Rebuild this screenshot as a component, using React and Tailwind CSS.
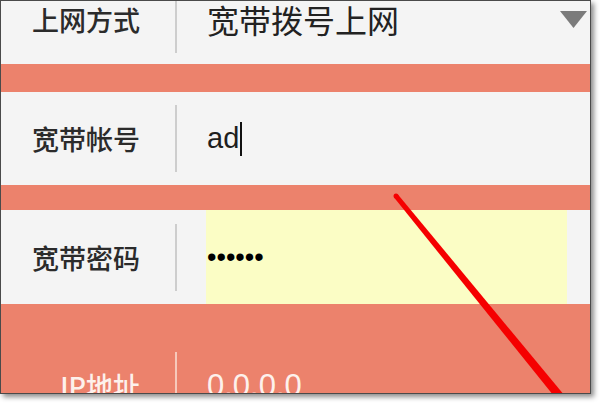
import React from "react";

const CJK = { fontFamily: '"Noto Sans CJK SC", "Noto Sans", sans-serif' };
const LAT = { fontFamily: '"Liberation Sans", Arial, sans-serif' };

function Label({ children, light }) {
  return (
    <div
      className={`w-[139px] shrink-0 text-right text-[27px] font-medium leading-none ${light ? "text-[#fdf1ec]" : "text-[#2b2b2b]"}`}
      style={CJK}
    >
      {children}
    </div>
  );
}

function Divider({ light }) {
  return (
    <div
      className={`ml-[35px] h-[67px] w-[2px] shrink-0 ${light ? "bg-[#f7c9bb]" : "bg-[#cdcdcd]"}`}
    />
  );
}

export default function App() {
  return (
    <div className="w-[600px] h-[404px] bg-white">
      <div className="relative w-[591px] h-[394px] overflow-hidden border border-[#4a4a4a] bg-[#f4f4f4] shadow-[3px_3px_5px_rgba(0,0,0,0.45)]">
        {/* Row 1: 上网方式 (clipped at top) */}
        <div className="flex h-[63px] items-end overflow-hidden bg-[#f4f4f4]">
          <div className="flex h-[90px] w-full shrink-0 items-center">
            <Label>上网方式</Label>
            <Divider />
            <div
              className="ml-[30px] flex-1 text-[32px] leading-none text-[#222]"
              style={CJK}
            >
              宽带拨号上网
            </div>
            <svg
              className="mr-[3px] shrink-0"
              width="27"
              height="17"
              viewBox="0 0 27 17"
            >
              <polygon points="0,0 27,0 13.5,17" fill="#7b7b7b" />
            </svg>
          </div>
        </div>

        <div className="h-[28px] bg-[#ec826c]" />

        {/* Row 2: 宽带帐号 */}
        <div className="flex h-[93px] items-center bg-[#f4f4f4]">
          <Label>宽带帐号</Label>
          <Divider />
          <div className="ml-[30px] flex items-center">
            <span className="text-[29px] leading-none text-[#1e1e1e]" style={LAT}>
              ad
            </span>
            <span className="ml-[1px] h-[34px] w-[2px] bg-[#111]" />
          </div>
        </div>

        <div className="h-[25px] bg-[#ec826c]" />

        {/* Row 3: 宽带密码 */}
        <div className="flex h-[94px] items-center bg-[#f4f4f4]">
          <Label>宽带密码</Label>
          <Divider />
          <div className="ml-[29px] flex h-full w-[361px] items-center bg-[#fbfdc5] pl-[1px]">
            <span
              className="text-[27px] leading-none text-black"
              style={LAT}
            >
              ••••••
            </span>
          </div>
        </div>

        {/* IP area */}
        <div className="bg-[#ec826c] pt-[35px]">
          <div className="flex h-[93px] items-center">
            <Label light>IP地址</Label>
            <Divider light />
            <div
              className="ml-[30px] text-[31px] leading-none text-[#fdf1ec]"
              style={LAT}
            >
              0.0.0.0
            </div>
          </div>
        </div>

        {/* red annotation stroke */}
        <svg
          className="pointer-events-none absolute left-0 top-0"
          width="591"
          height="394"
          viewBox="1 1 591 394"
        >
          <polygon
            points="397.94,194.42 582.49,417.16 575.51,422.84 394.06,197.58"
            fill="#f50000"
          />
          <circle cx="396" cy="196" r="2.5" fill="#f50000" />
        </svg>
      </div>
    </div>
  );
}
